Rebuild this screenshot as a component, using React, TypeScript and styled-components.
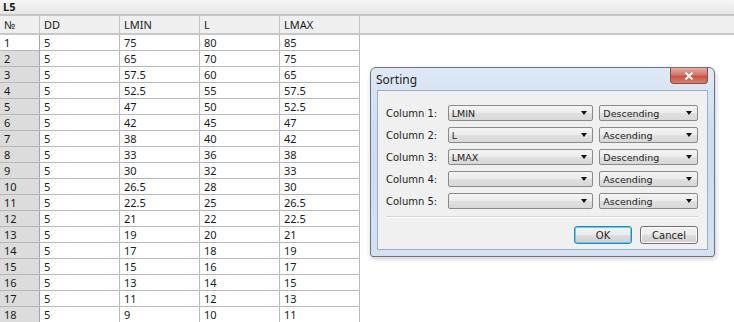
import styled, { createGlobalStyle } from 'styled-components';

const GlobalStyle = createGlobalStyle`
  body {
    margin: 0;
    background: #ffffff;
    font-family: 'Noto Sans', 'Open Sans', sans-serif;
  }
`;

const rows: [string, string, string, string][] = [
  ['5', '75', '80', '85'],
  ['5', '65', '70', '75'],
  ['5', '57.5', '60', '65'],
  ['5', '52.5', '55', '57.5'],
  ['5', '47', '50', '52.5'],
  ['5', '42', '45', '47'],
  ['5', '38', '40', '42'],
  ['5', '33', '36', '38'],
  ['5', '30', '32', '33'],
  ['5', '26.5', '28', '30'],
  ['5', '22.5', '25', '26.5'],
  ['5', '21', '22', '22.5'],
  ['5', '19', '20', '21'],
  ['5', '17', '18', '19'],
  ['5', '15', '16', '17'],
  ['5', '13', '14', '15'],
  ['5', '11', '12', '13'],
  ['5', '9', '10', '11'],
];

const sortRows = [
  { column: 'LMIN', order: 'Descending' },
  { column: 'L', order: 'Ascending' },
  { column: 'LMAX', order: 'Descending' },
  { column: '', order: 'Ascending' },
  { column: '', order: 'Ascending' },
];

function App() {
  return (
    <Page>
      <GlobalStyle />
      <TopBar>L5</TopBar>
      <HeaderRow>
        <HeadCell>№</HeadCell>
        <HeadCell>DD</HeadCell>
        <HeadCell>LMIN</HeadCell>
        <HeadCell>L</HeadCell>
        <HeadCell>LMAX</HeadCell>
        <HeadFiller />
      </HeaderRow>
      {rows.map((r, i) => (
        <Row key={i}>
          <NumCell $current={i === 0}>{i + 1}</NumCell>
          {r.map((v, j) => (
            <Cell key={j}>{v}</Cell>
          ))}
        </Row>
      ))}

      <Dialog>
        <TitleBar>
          <Title>Sorting</Title>
          <CloseButton>
            <svg width="10" height="8" viewBox="0 0 10 8">
              <path d="M1.5 0.5 L8.5 7.5 M8.5 0.5 L1.5 7.5" stroke="#ffffff" strokeWidth="2" />
            </svg>
          </CloseButton>
        </TitleBar>
        <Panel>
          {sortRows.map((s, i) => (
            <SortRow key={i}>
              <Label>Column {i + 1}:</Label>
              <Combo $width={146}>
                <span>{s.column}</span>
                <Arrow />
              </Combo>
              <Combo $width={99}>
                <span>{s.order}</span>
                <Arrow />
              </Combo>
            </SortRow>
          ))}
          <Separator />
          <Buttons>
            <Button $default>OK</Button>
            <Button>Cancel</Button>
          </Buttons>
        </Panel>
      </Dialog>
    </Page>
  );
}

export default App;

const Page = styled.div`
  position: relative;
  width: 734px;
  height: 322px;
  overflow: hidden;
  font-size: 11px;
  color: #1a1a1a;
`;

const TopBar = styled.div`
  height: 14px;
  line-height: 14px;
  padding-left: 3px;
  font-weight: bold;
  font-size: 11px;
  background: linear-gradient(#f6f6f6, #e6e6e6);
  border-bottom: 2px solid #c6c6c6;
`;

const HeaderRow = styled.div`
  display: grid;
  grid-template-columns: 40px 80px 80px 80px 80px 1fr;
  height: 17px;
  background: #efefef;
  border-bottom: 2px solid #c8c8c8;
`;

const HeadCell = styled.div`
  padding-left: 4px;
  line-height: 17px;
  border-right: 1px solid #c4c4c4;
`;

const HeadFiller = styled.div``;

const Row = styled.div`
  display: grid;
  grid-template-columns: 40px 80px 80px 80px 80px;
  height: 16px;
`;

const Cell = styled.div`
  padding-left: 4px;
  line-height: 15px;
  border-right: 1px solid #b8b8b8;
  border-bottom: 1px solid #b8b8b8;
  background: #ffffff;
`;

const NumCell = styled(Cell)<{ $current?: boolean }>`
  background: ${(p) => (p.$current ? '#ffffff' : '#dcdcdc')};
  border-right-color: #a8a8a8;
`;

const Dialog = styled.div`
  position: absolute;
  left: 370px;
  top: 67px;
  width: 343px;
  height: 188px;
  display: flex;
  flex-direction: column;
  border: 1px solid #6a7482;
  border-radius: 6px 6px 3px 3px;
  background: linear-gradient(180deg, #dfe9f5 0%, #cddcee 35%, #d3e1f1 100%);
  box-shadow: 1px 2px 5px rgba(0, 0, 0, 0.2);
  font-family: 'DejaVu Sans', 'Liberation Sans', sans-serif;
`;

const TitleBar = styled.div`
  height: 22px;
  display: flex;
  align-items: flex-start;
  justify-content: space-between;
  padding-left: 5px;
  padding-right: 6px;
`;

const Title = styled.span`
  font-family: 'Noto Sans', 'Open Sans', sans-serif;
  font-size: 12px;
  line-height: 22px;
  margin-top: 1px;
  color: #1e1e1e;
`;

const CloseButton = styled.div`
  width: 36px;
  height: 15px;
  display: flex;
  align-items: center;
  justify-content: center;
  border: 1px solid #8a4a44;
  border-top: none;
  border-radius: 0 0 4px 4px;
  background: linear-gradient(180deg, #e7aa9e 0%, #d5786a 45%, #c8543f 55%, #d9806c 100%);
`;

const Panel = styled.div`
  flex: 1;
  margin: 0 6px 6px 6px;
  background: #f0f0f0;
  border: 1px solid #9cb0c8;
  padding: 14px 9px 0 8px;
  display: flex;
  flex-direction: column;
`;

const SortRow = styled.div`
  display: flex;
  align-items: center;
  height: 16px;
  margin-bottom: 6px;
`;

const Label = styled.span`
  width: 62px;
  font-size: 10px;
  color: #1e1e1e;
`;

const Combo = styled.div<{ $width: number }>`
  width: ${(p) => p.$width}px;
  height: 16px;
  box-sizing: border-box;
  margin-right: 6px;
  display: flex;
  align-items: center;
  justify-content: space-between;
  padding: 0 5px 0 3px;
  border: 1px solid #8a8a8a;
  border-radius: 2px;
  background: linear-gradient(180deg, #f4f4f4 0%, #ececec 50%, #e0e0e0 51%, #d8d8d8 100%);
  font-size: 9.5px;
  color: #1e1e1e;
  &:last-child {
    margin-right: 0;
  }
`;

const Arrow = styled.span`
  width: 0;
  height: 0;
  border-left: 3.5px solid transparent;
  border-right: 3.5px solid transparent;
  border-top: 4px solid #111111;
`;

const Separator = styled.div`
  margin-top: 1px;
  height: 0;
  border-top: 1px solid #d5d5d5;
  border-bottom: 1px solid #ffffff;
`;

const Buttons = styled.div`
  display: flex;
  justify-content: flex-end;
  gap: 8px;
  margin-top: 8px;
`;

const Button = styled.div<{ $default?: boolean }>`
  width: 58px;
  height: 18px;
  box-sizing: border-box;
  display: flex;
  align-items: center;
  justify-content: center;
  font-size: 10px;
  color: #1e1e1e;
  border: 1px solid ${(p) => (p.$default ? '#3c7fb1' : '#707070')};
  border-radius: 3px;
  background: linear-gradient(180deg, #f2f2f2 0%, #ebebeb 50%, #dddddd 51%, #cfcfcf 100%);
  box-shadow: ${(p) => (p.$default ? 'inset 0 0 0 1px #48d8fb' : 'inset 0 0 0 1px #fcfcfc')};
`;
